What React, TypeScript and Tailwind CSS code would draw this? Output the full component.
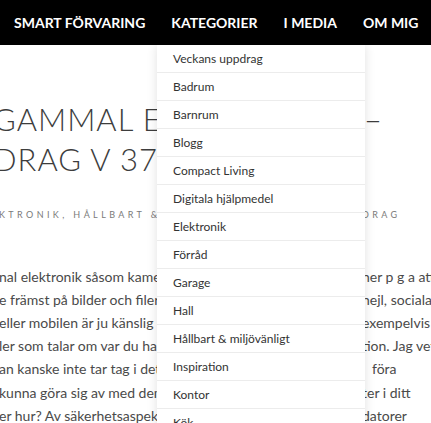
import React from "react";

const cats = [
  "Veckans uppdrag",
  "Badrum",
  "Barnrum",
  "Blogg",
  "Compact Living",
  "Digitala hjälpmedel",
  "Elektronik",
  "Förråd",
  "Garage",
  "Hall",
  "Hållbart & miljövänligt",
  "Inspiration",
  "Kontor",
  "Kök",
];

const body: [string, string, string?][] = [
  ["nal elektronik såsom kameror, mobiler och da", "ner p g a att"],
  ["e främst på bilder och filer. Men även mailko", "nejl, sociala"],
  ["eller mobilen är ju känslig och innehåller till", "exempelvis"],
  ["ler som talar om var du har varit, lokalisa", "tion. Jag vet"],
  ["an kanske inte tar tag i det här med att", "föra", "pl-[10px]"],
  ["kunna göra sig av med dem, men hur rensar", "ter i ditt"],
  ["er hur? Av säkerhetsaspekter bör gamla", "datorer"],
];

export default function App() {
  return (
    <div
      className="relative w-[431px] h-[423px] overflow-hidden bg-white"
      style={{ fontFamily: "Lato, 'Open Sans', sans-serif" }}
    >
      <nav className="h-[45px] bg-black flex items-center pl-[14px] gap-[26px] text-white font-bold text-[14px] uppercase whitespace-nowrap">
        <span>Smart förvaring</span>
        <span>Kategorier</span>
        <span>I media</span>
        <span>Om mig</span>
      </nav>

      <main className="pt-[54px]">
        <h1 className="font-light text-[31px] leading-[40px] uppercase tracking-[1px] text-[#3d3d3d] whitespace-nowrap">
          <div className="grid grid-cols-[362px_1fr]">
            <span className="-ml-[7px] overflow-hidden">Gammal elektronik</span>
            <span className="pl-[2px]">–</span>
          </div>
          <div className="-ml-[7px]">Drag v 37</div>
        </h1>

        <div className="mt-[29px] grid grid-cols-[362px_1fr] text-[9px] tracking-[3.4px] uppercase text-[#7a7a7a] whitespace-nowrap">
          <span className="-ml-[1px]">ktronik, hållbart &amp; miljövänligt</span>
          <span className="overflow-hidden">drag</span>
        </div>

        <div className="mt-[43px] text-[14px] leading-[23.2px] text-[#4a4a4a] whitespace-nowrap">
          {body.map(([l, r, cls], i) => (
            <div key={i} className="grid grid-cols-[362px_1fr]">
              <span className="-ml-[1px]">{l}</span>
              <span className={"overflow-hidden " + (cls ?? "")}>{r}</span>
            </div>
          ))}
        </div>
      </main>

      <ul className="absolute left-[157px] top-[45px] w-[208px] bg-white shadow-[0_0_10px_rgba(0,0,0,0.12)] text-[12px] text-[#333]">
        {cats.map((c) => (
          <li
            key={c}
            className="h-[28px] flex items-center pl-[16px] border-b border-[#ececec] whitespace-nowrap"
          >
            {c}
          </li>
        ))}
      </ul>
    </div>
  );
}
